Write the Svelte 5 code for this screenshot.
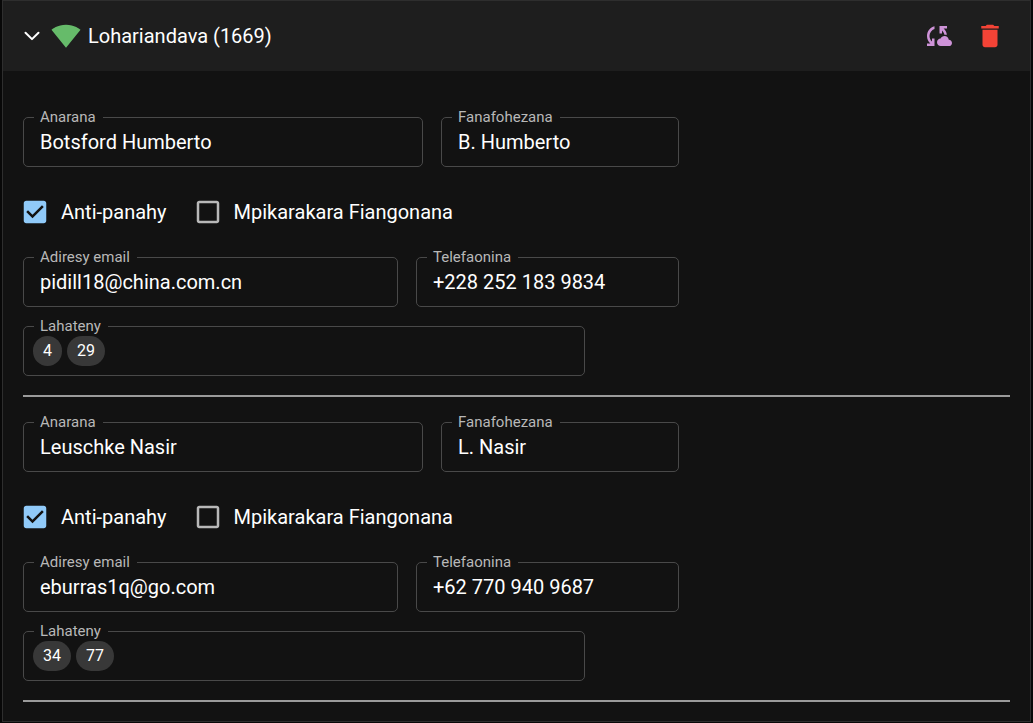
<script>
  let people = $state([
    { id: 'a', name: 'Botsford Humberto', short: 'B. Humberto', elder: true, overseer: false, email: 'pidill18@china.com.cn', phone: '+228 252 183 9834', talks: [4, 29] },
    { id: 'b', name: 'Leuschke Nasir', short: 'L. Nasir', elder: true, overseer: false, email: 'eburras1q@go.com', phone: '+62 770 940 9687', talks: [34, 77] },
  ]);
</script>

{#snippet field(id, label, value, oninput, type = 'text')}
  <div class="field">
    <label for={id}>{label}</label>
    <input {id} {type} {value} oninput={(e) => oninput(e.currentTarget.value)} />
  </div>
{/snippet}

<main class="card">
  <header>
    <button class="toggle" aria-expanded="true">
      <svg class="icon" viewBox="0 0 24 24" aria-hidden="true"><path class="chevron" d="M6.8 9.4 12 14.5 17.2 9.4" /></svg>
      <svg class="icon signal" viewBox="0 0 24 24" aria-hidden="true"><path d="M12.01 21.49 23.64 7c-.45-.34-4.93-4-11.64-4C5.28 3 .81 6.66.36 7l11.63 14.49.01.01.01-.01z" /></svg>
      <span class="title">Lohariandava (1669)</span>
    </button>
    <button class="action sync" aria-label="Sync">
      <svg class="icon" viewBox="0 0 24 24"><path d="M21.5 14.98c-.02 0-.03 0-.05.01C21.2 13.3 19.76 12 18 12c-1.4 0-2.6.83-3.16 2.02C13.26 14.1 12 15.4 12 17c0 1.66 1.34 3 3 3h6.5c1.38 0 2.5-1.12 2.5-2.5s-1.12-2.52-2.5-2.52zM10 4.26v2.09C7.67 7.18 6 9.39 6 12c0 1.77.78 3.34 2 4.44V14h2v6H4v-2h2.73C5.06 16.54 4 14.4 4 12c0-3.73 2.55-6.85 6-7.74zM20 6h-2.73c1.43 1.26 2.41 3.01 2.66 5h-2.02c-.23-1.36-.93-2.55-1.91-3.44V10h-2V4h6v2z" /></svg>
    </button>
    <button class="action delete" aria-label="Delete">
      <svg class="icon" viewBox="0 0 24 24"><path d="M6 19c0 1.1.9 2 2 2h8c1.1 0 2-.9 2-2V7H6v12zM19 4h-3.5l-1-1h-5l-1 1H5v2h14V4z" /></svg>
    </button>
  </header>

  <div class="content">
    {#each people as p (p.id)}
      <section>
        <div class="row names">
          {@render field(`name-${p.id}`, 'Anarana', p.name, (v) => (p.name = v))}
          {@render field(`short-${p.id}`, 'Fanafohezana', p.short, (v) => (p.short = v))}
        </div>

        <div class="checks">
          <label class="check"><span class="box"><input type="checkbox" bind:checked={p.elder} /><svg viewBox="0 0 24 24" aria-hidden="true">{@render boxPath(p.elder)}</svg></span>Anti-panahy</label>
          <label class="check"><span class="box"><input type="checkbox" bind:checked={p.overseer} /><svg viewBox="0 0 24 24" aria-hidden="true">{@render boxPath(p.overseer)}</svg></span>Mpikarakara Fiangonana</label>
        </div>

        <div class="row contacts">
          {@render field(`email-${p.id}`, 'Adiresy email', p.email, (v) => (p.email = v), 'email')}
          {@render field(`phone-${p.id}`, 'Telefaonina', p.phone, (v) => (p.phone = v), 'tel')}
        </div>

        <div class="field talks">
          <label for="talks-{p.id}">Lahateny</label>
          {#each p.talks as t}<span class="chip">{t}</span>{/each}
          <input id="talks-{p.id}" type="text" />
        </div>
      </section>
      <hr />
    {/each}
  </div>
</main>

{#snippet boxPath(on)}
  {#if on}
    <path class="on" d="M19 3H5c-1.11 0-2 .9-2 2v14c0 1.1.89 2 2 2h14c1.11 0 2-.9 2-2V5c0-1.1-.89-2-2-2zm-9 14l-5-5 1.41-1.41L10 14.17l7.59-7.59L19 8l-9 9z" />
  {:else}
    <path class="off" d="M19 5v14H5V5h14m0-2H5c-1.1 0-2 .9-2 2v14c0 1.1.9 2 2 2h14c1.1 0 2-.9 2-2V5c0-1.1-.9-2-2-2z" />
  {/if}
{/snippet}

<style>
  :global(body) {
    background: #080808;
    color: #fff;
    font-family: Roboto, sans-serif;
    font-size: 20px;
  }
  .card {
    margin: 0 2px;
    border: 1px solid #2e2e2e;
    background: #121212;
  }
  header {
    display: flex;
    align-items: center;
    gap: 23px;
    padding: 20px 25px 20px 14px;
    background: #1e1e1e;
  }
  button {
    padding: 0;
    border: 0;
    background: none;
    color: inherit;
    font: inherit;
    cursor: pointer;
  }
  .toggle {
    display: flex;
    flex: 1;
    align-items: center;
    text-align: left;
    line-height: 30px;
  }
  .icon {
    display: block;
    flex: none;
    width: 30px;
    height: 30px;
    fill: currentColor;
  }
  .chevron {
    fill: none;
    stroke: currentColor;
    stroke-width: 1.6;
    stroke-linecap: round;
    stroke-linejoin: round;
  }
  .signal {
    margin: 0 7px 0 4px;
    color: #66bb6a;
  }
  .sync {
    color: #ce93d8;
  }
  .delete {
    color: #f44336;
  }
  .content {
    padding: 46px 20px 19px;
  }
  .row {
    display: grid;
    gap: 18px;
    max-width: 656px;
  }
  .names {
    grid-template-columns: 400fr 238fr;
  }
  .contacts {
    grid-template-columns: 375fr 263fr;
  }
  .field {
    position: relative;
    box-sizing: border-box;
    display: flex;
    min-width: 0;
    height: 50px;
    border: 1px solid #494949;
    border-radius: 5px;
  }
  .field label {
    position: absolute;
    top: -10px;
    left: 10px;
    padding: 0 7px 0 6px;
    background: #121212;
    color: #b8b8b8;
    font-size: 15px;
    line-height: 18px;
  }
  .field input {
    flex: 1;
    width: 100%;
    min-width: 0;
    padding: 0 16px;
    border: 0;
    outline: 0;
    background: none;
    color: inherit;
    font: inherit;
  }
  .talks {
    align-items: center;
    gap: 5px;
    max-width: 562px;
    margin-top: 19px;
    padding: 0 9px;
  }
  .chip {
    padding: 0 10px;
    border-radius: 15px;
    background: #383838;
    font-size: 16px;
    line-height: 30px;
  }
  .checks {
    display: flex;
    flex-wrap: wrap;
    gap: 26px;
    margin: 30px 0 30px -3px;
  }
  .check {
    display: flex;
    align-items: center;
    gap: 11px;
    line-height: 30px;
  }
  .box {
    position: relative;
    width: 30px;
    height: 30px;
  }
  .box input {
    position: absolute;
    inset: 0;
    width: 30px;
    height: 30px;
    margin: 0;
    opacity: 0;
  }
  .box svg {
    display: block;
    width: 30px;
    height: 30px;
  }
  .on {
    fill: #90caf9;
  }
  .off {
    fill: #b8b8b8;
  }
  hr {
    height: 2px;
    margin: 19px 0 25px;
    border: 0;
    background: #9a9a9a;
  }
  hr:last-child {
    margin-bottom: 0;
  }
</style>
